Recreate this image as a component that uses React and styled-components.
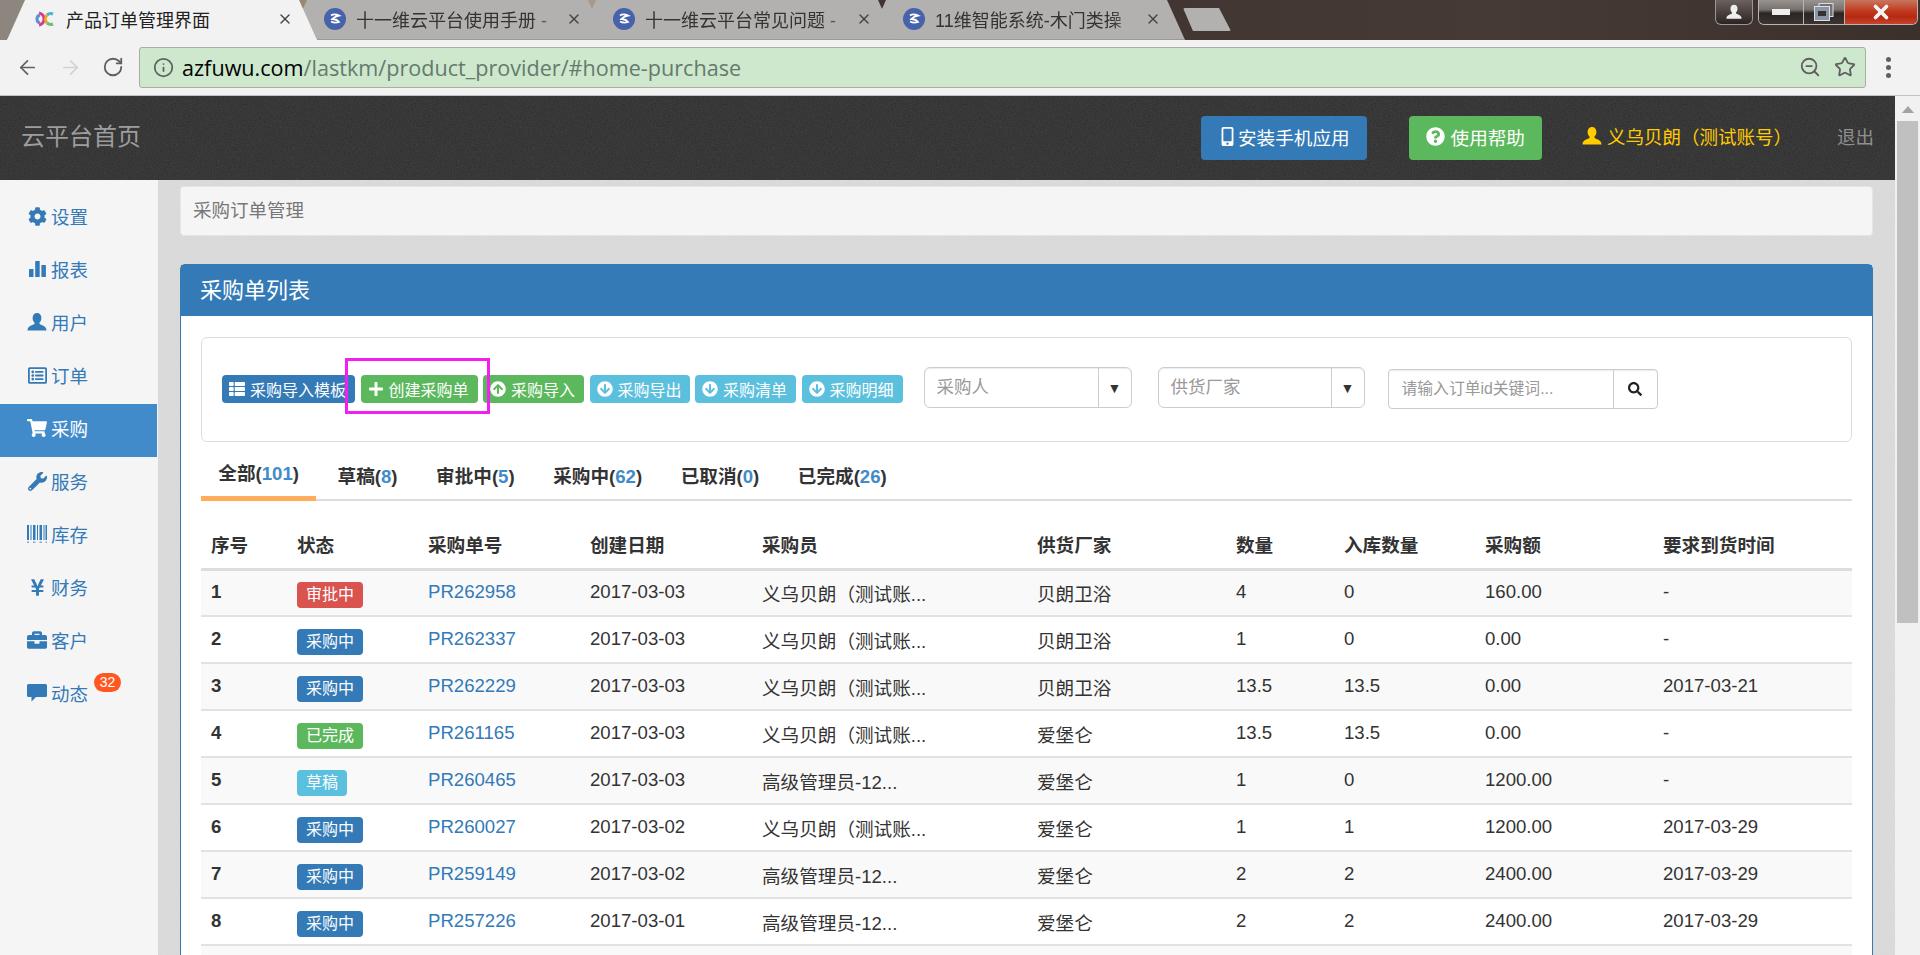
import React from "react";
import styled, { createGlobalStyle } from "styled-components";
import { ArrowLeft, ArrowRight, RotateCw, Info, ZoomOut, Star, X } from "lucide-react";
import {
  FaCog, FaRegListAlt, FaShoppingCart, FaWrench, FaYenSign, FaBriefcase,
  FaThList, FaPlus, FaArrowCircleUp, FaArrowCircleDown, FaSearch, FaMobileAlt, FaQuestionCircle,
} from "react-icons/fa";

const FONT = `"Liberation Sans", "Noto Sans CJK SC", sans-serif`;

const noise = (alpha) =>
  `url("data:image/svg+xml,%3Csvg xmlns='http://www.w3.org/2000/svg' width='240' height='240'%3E%3Cfilter id='n'%3E%3CfeTurbulence type='fractalNoise' baseFrequency='0.7' numOctaves='2' stitchTiles='stitch'/%3E%3CfeColorMatrix values='0 0 0 0 0.5 0 0 0 0 0.5 0 0 0 0 0.5 0 0 0 ${alpha} 0'/%3E%3C/filter%3E%3Crect width='240' height='240' filter='url(%23n)'/%3E%3C/svg%3E")`;

const GlobalStyle = createGlobalStyle`
  html, body {
    margin: 0;
    padding: 0;
    overflow: hidden;
    background: #f5f5f5;
  }
  * { box-sizing: border-box; }
`;

const Shell = styled.div`
  width: 1920px;
  height: 955px;
  overflow: hidden;
  display: flex;
  flex-direction: column;
  font-family: ${FONT};
  color: #333;
`;

/* browser chrome */
const TabStrip = styled.div`
  height: 40px;
  flex: none;
  display: flex;
  padding-left: 7px;
  background: linear-gradient(to right, #8d867f 0, #8d867f 30px, #9a8870 310px, #a89a8a 600px, #a89a8a 620px, #3f3330 885px, #453a36 1500px, #3c302d 1920px);
`;

const Tab = styled.div`
  position: relative;
  z-index: ${(p) => p.$z};
  width: ${(p) => p.$width}px;
  margin-left: ${(p) => (p.$first ? 0 : -28)}px;
  height: 40px;
  flex: none;
  display: flex;
  align-items: center;
  padding: 0 24px 2px ${(p) => (p.$active ? 28 : 35)}px;
  gap: ${(p) => (p.$active ? 11 : 10)}px;
  background: ${(p) => (p.$active ? "#f2f2f2" : "#b3b1b0")};
  border-bottom: 1px solid ${(p) => (p.$active ? "#f2f2f2" : "#9b9a99")};
  clip-path: polygon(18px 0, calc(100% - 18px) 0, 100% 100%, 0 100%);
  font-size: 18px;
  color: ${(p) => (p.$active ? "#222" : "#333")};
`;

const TabTitle = styled.span`
  flex: 1;
  min-width: 0;
  white-space: nowrap;
  mask-image: ${(p) => (p.$fade ? "linear-gradient(to right, #000 88%, rgba(0, 0, 0, 0.35) 100%)" : "none")};
`;

const TabClose = styled(X)`
  flex: none;
  width: 16px;
  height: 16px;
  color: #444;
`;

const NewTab = styled.div`
  width: 48px;
  height: 23px;
  margin: 8px 0 0 -2px;
  flex: none;
  background: #b3b1b0;
  border-radius: 2px;
  clip-path: polygon(0 0, 36px 0, 100% 100%, 10px 100%);
`;

const WindowControls = styled.div`
  margin-left: auto;
  height: 25px;
  display: flex;
  gap: 5px;
  padding-right: 2px;
`;

const ProfileButton = styled.div`
  width: 38px;
  height: 25px;
  display: flex;
  align-items: center;
  justify-content: center;
  border: 1px solid #9b9794;
  border-top: none;
  border-radius: 0 0 6px 6px;
  color: #eee;
  background: linear-gradient(#6b615e, #2b2422);
`;

const CaptionGroup = styled.div`
  display: flex;
  height: 25px;
  border: 1px solid #b9b5b2;
  border-top: none;
  border-radius: 0 0 6px 6px;
  overflow: hidden;
`;

const CaptionButton = styled.div`
  width: ${(p) => p.$width}px;
  display: flex;
  align-items: center;
  justify-content: center;
  border-left: ${(p) => (p.$divider ? "1px solid #b9b5b2" : "none")};
  background: ${(p) =>
    p.$close
      ? "linear-gradient(#c8765f 0, #c23a1f 45%, #b52a12 70%, #c9432a 100%)"
      : "linear-gradient(#9a9491 0, #77716e 40%, #2b2523 55%, #3b3432 100%)"};
`;

const Toolbar = styled.div`
  height: 56px;
  flex: none;
  display: flex;
  align-items: center;
  background: #f2f2f2;
  border-bottom: 1px solid #c4c4c4;
  padding: 0 16px 1px 16px;
`;

const NavIcon = styled.span`
  display: flex;
  color: ${(p) => (p.$disabled ? "#d2d2d2" : "#5f5f5f")};
  margin-right: ${(p) => p.$gap}px;
`;

const Omnibox = styled.div`
  width: 1727px;
  height: 41px;
  display: flex;
  align-items: center;
  padding: 0 9px 0 13px;
  background: #cde8cd;
  border: 1px solid #a9aca9;
  border-radius: 3px;
  font-family: "Open Sans", sans-serif;
  font-size: 21.6px;
  color: #667a6c;
`;

const UrlText = styled.span`
  flex: 1;
  margin-left: 8px;
  white-space: nowrap;
`;

const UrlHost = styled.span`
  color: #000;
`;

const MenuDots = styled.div`
  margin-left: 20px;
  display: flex;
  flex-direction: column;
  gap: 3px;
`;

const MenuDot = styled.i`
  width: 5px;
  height: 5px;
  border-radius: 50%;
  background: #606060;
`;

/* page */
const Viewport = styled.div`
  flex: 1;
  min-height: 0;
  display: flex;
`;

const Page = styled.div`
  flex: 1;
  min-width: 0;
  display: flex;
  flex-direction: column;
`;

const Scrollbar = styled.div`
  width: 25px;
  flex: none;
  background: #f1f1f1;
  display: flex;
  flex-direction: column;
  align-items: center;
`;

const ScrollArrow = styled.div`
  width: 0;
  height: 0;
  margin: 10px 0 8px;
  border-left: 6px solid transparent;
  border-right: 6px solid transparent;
  border-bottom: 7px solid #a3a3a3;
`;

const ScrollThumb = styled.div`
  width: 21px;
  height: 502px;
  background: #c0c0c0;
`;

const TopBar = styled.header`
  height: 84px;
  flex: none;
  display: flex;
  align-items: center;
  padding: 0 21px;
  background: #2c2c2c ${noise(0.16)};
`;

const Brand = styled.div`
  font-size: 24px;
  padding-bottom: 8px;
  color: #9d9d9d;
  margin-right: auto;
`;

const TopButton = styled.div`
  height: 44px;
  display: flex;
  align-items: center;
  gap: ${(p) => p.$gap}px;
  padding: 0 ${(p) => p.$pad}px 4px;
  margin-right: ${(p) => p.$after}px;
  border-radius: 4px;
  font-size: 18.6px;
  color: #fff;
  background: ${(p) => p.$bg};
`;

const UserName = styled.div`
  display: flex;
  align-items: center;
  gap: 5px;
  padding-bottom: 4px;
  font-size: 18.5px;
  color: #ffcc00;
  margin-right: 45px;
`;

const Logout = styled.div`
  font-size: 18.5px;
  padding-bottom: 4px;
  color: #8f8f8f;
`;

const Body = styled.div`
  flex: 1;
  min-height: 0;
  display: flex;
`;

const Sidebar = styled.nav`
  width: 158px;
  flex: none;
  padding-top: 12px;
  background: #f5f5f5;
`;

const NavItem = styled.div`
  position: relative;
  width: 157px;
  height: 53px;
  display: flex;
  align-items: center;
  gap: 4px;
  padding: 0 0 5px 27px;
  font-size: 18.5px;
  color: ${(p) => (p.$active ? "#fff" : "#337ab7")};
  background: ${(p) => (p.$active ? "#428bca" : "transparent")};
`;

const NavGlyph = styled.span`
  width: 20px;
  display: flex;
  justify-content: center;
`;

const CountBubble = styled.span`
  position: absolute;
  left: 94px;
  top: 4px;
  width: 27px;
  height: 19px;
  border-radius: 10px;
  background: #ff5722;
  color: #fff;
  font-size: 14px;
  line-height: 19px;
  text-align: center;
`;

const Content = styled.main`
  flex: 1;
  min-width: 0;
  padding: 6px 22px 0;
  background: #dcdcdc ${noise(0.14)};
`;

const Breadcrumb = styled.div`
  height: 50px;
  display: flex;
  align-items: center;
  padding: 0 0 4px 12px;
  border: 1px solid #e6e6e6;
  border-radius: 4px;
  background: #f5f5f5;
  font-size: 18.5px;
  color: #777;
`;

const Panel = styled.section`
  margin-top: 28px;
  border: 1px solid #337ab7;
  border-radius: 5px 5px 0 0;
  background: #fff;
`;

const PanelHead = styled.div`
  height: 51px;
  display: flex;
  align-items: center;
  padding: 0 0 5px 19px;
  background: #337ab7;
  font-size: 22px;
  color: #fff;
`;

const PanelBody = styled.div`
  padding: 21px 20px 0;
`;

const Well = styled.div`
  position: relative;
  height: 105px;
  display: flex;
  align-items: flex-start;
  padding: 37px 0 0 20px;
  border: 1px solid #ddd;
  border-radius: 6px;
`;

const Actions = styled.div`
  display: flex;
  gap: 5.5px;
`;

const ActionButton = styled.div`
  width: ${(p) => p.$width}px;
  height: 28px;
  display: flex;
  align-items: center;
  gap: ${(p) => p.$gap}px;
  padding-left: 7px;
  border-radius: 4px;
  white-space: nowrap;
  font-size: 16px;
  color: #fff;
  background: ${(p) => p.$bg};
`;

const Highlight = styled.div`
  position: absolute;
  left: 143px;
  top: 20px;
  width: 145px;
  height: 56px;
  border: 3px solid #f31ff0;
`;

const Picker = styled.div`
  width: ${(p) => p.$width}px;
  height: 41px;
  margin: -8px 0 0 ${(p) => p.$left}px;
  display: flex;
  border: 1px solid #ccc;
  border-radius: 6px;
  box-shadow: inset 0 1px 1px rgba(0, 0, 0, 0.075);
  font-size: 17.5px;
  color: #999;
`;

const PickerLabel = styled.div`
  flex: 1;
  padding: 5px 0 0 12px;
`;

const PickerCaret = styled.div`
  width: 33px;
  display: flex;
  align-items: center;
  justify-content: center;
  border-left: 1px solid #ccc;
  color: #333;
  font-size: 14px;
`;

const SearchBox = styled.div`
  width: 270px;
  height: 40px;
  margin: -6px 0 0 23px;
  display: flex;
  border: 1px solid #ccc;
  border-radius: 4px;
  box-shadow: inset 0 1px 1px rgba(0, 0, 0, 0.075);
`;

const SearchInput = styled.input`
  width: 224px;
  border: none;
  outline: none;
  background: transparent;
  padding: 0 0 0 13px;
  font-family: ${FONT};
  font-size: 15.8px;
  &::placeholder { color: #999; opacity: 1; }
`;

const SearchButton = styled.div`
  flex: 1;
  display: flex;
  align-items: center;
  justify-content: center;
  border-left: 1px solid #ccc;
  color: #222;
`;

const Tabs = styled.div`
  height: 59px;
  display: flex;
  align-items: flex-end;
  gap: 4px;
  border-bottom: 2px solid #ddd;
`;

const FilterTab = styled.div`
  height: 46px;
  padding: ${(p) => (p.$active ? "6px" : "9px")} 17.3px 0;
  margin-bottom: -2px;
  border-bottom: 5px solid ${(p) => (p.$active ? "#ffad5c" : "transparent")};
  font-size: 18.6px;
  line-height: 26px;
  font-weight: 700;
`;

const Count = styled.span`
  color: #428bca;
`;

const OrderTable = styled.table`
  width: 1651px;
  margin-top: 20px;
  table-layout: fixed;
  border-collapse: collapse;
  font-size: 18.6px;
`;

const HeadCell = styled.th`
  height: 48px;
  padding: 0 0 2px 10px;
  text-align: left;
  font-weight: 700;
  border-bottom: 3px solid #ddd;
`;

const Row = styled.tr`
  height: 47px;
  background: ${(p) => (p.$striped ? "#f9f9f9" : "#fff")};
`;

const Cell = styled.td`
  padding: 0 0 1px 10px;
  border-bottom: 2px solid #e2e2e2;
  font-weight: ${(p) => (p.$bold ? 700 : 400)};
  white-space: nowrap;
`;

const StatusLabel = styled.span`
  display: inline-block;
  height: 26px;
  margin-top: 5px;
  padding: 0 9px;
  border-radius: 4px;
  font-size: 16px;
  line-height: 26px;
  color: #fff;
  background: ${(p) => p.$bg};
`;

const OrderLink = styled.a`
  color: #337ab7;
`;

const BLUE = "#337ab7";
const GREEN = "#5cb85c";
const CYAN = "#5bc0de";
const RED = "#d9534f";

const statusColors = { 审批中: RED, 采购中: BLUE, 已完成: GREEN, 草稿: CYAN };

const BUYER = "义乌贝朗（测试账...";
const ADMIN = "高级管理员-12...";

const rows = [
  [1, "审批中", "PR262958", "2017-03-03", BUYER, "贝朗卫浴", "4", "0", "160.00", "-"],
  [2, "采购中", "PR262337", "2017-03-03", BUYER, "贝朗卫浴", "1", "0", "0.00", "-"],
  [3, "采购中", "PR262229", "2017-03-03", BUYER, "贝朗卫浴", "13.5", "13.5", "0.00", "2017-03-21"],
  [4, "已完成", "PR261165", "2017-03-03", BUYER, "爱堡仑", "13.5", "13.5", "0.00", "-"],
  [5, "草稿", "PR260465", "2017-03-03", ADMIN, "爱堡仑", "1", "0", "1200.00", "-"],
  [6, "采购中", "PR260027", "2017-03-02", BUYER, "爱堡仑", "1", "1", "1200.00", "2017-03-29"],
  [7, "采购中", "PR259149", "2017-03-02", ADMIN, "爱堡仑", "2", "2", "2400.00", "2017-03-29"],
  [8, "采购中", "PR257226", "2017-03-01", ADMIN, "爱堡仑", "2", "2", "2400.00", "2017-03-29"],
];

const columns = [
  ["序号", 86], ["状态", 131], ["采购单号", 162], ["创建日期", 172], ["采购员", 275],
  ["供货厂家", 199], ["数量", 108], ["入库数量", 141], ["采购额", 178], ["要求到货时间", 199],
];

const filters = [
  ["全部", 101, true], ["草稿", 8], ["审批中", 5], ["采购中", 62], ["已取消", 0], ["已完成", 26],
];

const BarsIcon = () => (
  <svg width="19" height="18" viewBox="0 0 19 18" fill="currentColor">
    <rect x="1" y="9" width="4.5" height="8" rx="0.6" />
    <rect x="7.2" y="1" width="4.5" height="16" rx="0.6" />
    <rect x="13.4" y="5" width="4.5" height="12" rx="0.6" />
  </svg>
);

const UserIcon = ({ size = 20 }) => (
  <svg width={size} height={size} viewBox="0 0 20 20" fill="currentColor">
    <path d="M10 1C7.2 1 5.6 3 5.6 6c0 2 .8 3.6 1.9 4.6V12C6.5 13 .5 13.5.5 18.5h19c0-5-6-5.5-7-6.5v-1.4c1.1-1 1.9-2.6 1.9-4.6 0-3-1.6-5-4.4-5z" />
  </svg>
);

const BarcodeIcon = () => (
  <svg width="20" height="18" viewBox="0 0 20 18" fill="currentColor">
    <path d="M0 0h2v15H0zM3.5 0h1v15h-1zM6 0h2.5v15H6zM10 0h1v15h-1zM12.5 0h2.500v15h-2.500zM16.500 0h1v15h-1zM18.500 0h1.500v15h-1.500z" />
    <path d="M0 16.500h2V18H0zM6 16.500h2.500V18H6zM12.500 16.500h2.500V18h-2.500zM18.500 16.500H20V18h-1.500z" opacity="0.6" />
  </svg>
);

const CommentIcon = () => (
  <svg width="20" height="18" viewBox="0 0 20 18" fill="currentColor">
    <path d="M1.500 0h17A1.500 1.500 0 0 1 20 1.500v10a1.500 1.500 0 0 1-1.500 1.500H9l-4.500 4.500V13h-3A1.500 1.500 0 0 1 0 11.500v-10A1.500 1.500 0 0 1 1.500 0z" />
  </svg>
);

const navItems = [
  ["设置", <FaCog size={19} />],
  ["报表", <BarsIcon />],
  ["用户", <UserIcon />],
  ["订单", <FaRegListAlt size={19} />],
  ["采购", <FaShoppingCart size={20} />, true],
  ["服务", <FaWrench size={19} />],
  ["库存", <BarcodeIcon />],
  ["财务", <FaYenSign size={19} />],
  ["客户", <FaBriefcase size={20} />],
  ["动态", <CommentIcon />],
];

const actionButtons = [
  ["采购导入模板", BLUE, <FaThList size={16} />, 133, 5],
  ["创建采购单", GREEN, <FaPlus size={16} />, 117, 5],
  ["采购导入", GREEN, <FaArrowCircleUp size={16} />, 101, 5],
  ["采购导出", CYAN, <FaArrowCircleDown size={16} />, 100, 5],
  ["采购清单", CYAN, <FaArrowCircleDown size={16} />, 101, 5],
  ["采购明细", CYAN, <FaArrowCircleDown size={16} />, 101, 5],
];

const JcLogo = () => (
  <svg width="20" height="20" viewBox="0 0 20 20" fill="none" strokeWidth="3" style={{ flex: "none" }}>
    <path d="M4 4a6 6 0 0 1 5 6 6 6 0 0 1-5 6" stroke="#d93a8c" />
    <path d="M5 6a4 4 0 0 0-3 4 4 4 0 0 0 3 4" stroke="#5f8fd8" />
    <path d="M18 5a6 6 0 0 0-6 1" stroke="#49b6c9" />
    <path d="M12 6a6 6 0 0 0 0 8" stroke="#e9a62c" />
    <path d="M12 14a6 6 0 0 0 6 1" stroke="#6cc070" />
  </svg>
);

const ZLogo = () => (
  <svg width="22" height="22" viewBox="0 0 22 22" style={{ flex: "none" }}>
    <circle cx="11" cy="11" r="11" fill="#4662ab" />
    <path d="M7 7.500c2-1.500 5-1.500 8 0-3 .5-5 2-6.500 3.500 2.500 0 4.500.5 6.500 3-3 1-6 .5-8-.5" fill="none" stroke="#fff" strokeWidth="1.800" />
  </svg>
);

const browserTabs = [
  { title: "产品订单管理界面", width: 310, active: true },
  { title: "十一维云平台使用手册 -", width: 317, z: 3 },
  { title: "十一维云平台常见问题 -", width: 318, z: 2 },
  { title: "11维智能系统-木门类操", width: 317, z: 1 },
];

function App() {
  return (
    <Shell>
      <GlobalStyle />
      <TabStrip>
        {browserTabs.map((tab, i) => (
          <Tab key={tab.title} $active={tab.active} $first={i === 0} $width={tab.width} $z={tab.active ? 4 : tab.z}>
            {tab.active ? <JcLogo /> : <ZLogo />}
            <TabTitle $fade={!tab.active}>{tab.title}</TabTitle>
            <TabClose strokeWidth={2} />
          </Tab>
        ))}
        <NewTab />
        <WindowControls>
          <ProfileButton>
            <UserIcon size={16} />
          </ProfileButton>
          <CaptionGroup>
            <CaptionButton $width={44}>
              <svg width="18" height="6"><rect width="18" height="6" fill="#eee" /></svg>
            </CaptionButton>
            <CaptionButton $width={41} $divider>
              <svg width="20" height="18" viewBox="0 0 20 18">
                <rect x="5" y="0.5" width="14" height="13" fill="#77716e" stroke="#dde" />
                <rect x="0.5" y="3.5" width="15" height="14" fill="#8c95a2" stroke="#dde" />
                <rect x="4" y="8" width="8" height="5" fill="#333" />
              </svg>
            </CaptionButton>
            <CaptionButton $width={73} $close $divider>
              <X size={22} color="#f4f4f4" strokeWidth={4} />
            </CaptionButton>
          </CaptionGroup>
        </WindowControls>
      </TabStrip>

      <Toolbar>
        <NavIcon $gap={20}><ArrowLeft size={23} strokeWidth={1.8} /></NavIcon>
        <NavIcon $gap={20} $disabled><ArrowRight size={23} strokeWidth={1.8} /></NavIcon>
        <NavIcon $gap={15}><RotateCw size={22} strokeWidth={2} /></NavIcon>
        <Omnibox>
          <NavIcon $gap={0}><Info size={21} strokeWidth={2} /></NavIcon>
          <UrlText>
            <UrlHost>azfuwu.com</UrlHost>/lastkm/product_provider/#home-purchase
          </UrlText>
          <NavIcon $gap={13}><ZoomOut size={22} strokeWidth={2} /></NavIcon>
          <NavIcon $gap={0}><Star size={22} strokeWidth={2} /></NavIcon>
        </Omnibox>
        <MenuDots>
          <MenuDot />
          <MenuDot />
          <MenuDot />
        </MenuDots>
      </Toolbar>

      <Viewport>
        <Page>
          <TopBar>
            <Brand>云平台首页</Brand>
            <TopButton $bg={BLUE} $pad={17} $gap={1} $after={42}>
              <FaMobileAlt size={19} />
              安装手机应用
            </TopButton>
            <TopButton $bg={GREEN} $pad={17} $gap={6} $after={40}>
              <FaQuestionCircle size={19} />
              使用帮助
            </TopButton>
            <UserName>
              <UserIcon size={20} />
              义乌贝朗（测试账号）
            </UserName>
            <Logout>退出</Logout>
          </TopBar>

          <Body>
            <Sidebar>
              {navItems.map(([label, icon, active]) => (
                <NavItem key={label} $active={active}>
                  <NavGlyph>{icon}</NavGlyph>
                  {label}
                  {label === "动态" && <CountBubble>32</CountBubble>}
                </NavItem>
              ))}
            </Sidebar>

            <Content>
              <Breadcrumb>采购订单管理</Breadcrumb>
              <Panel>
                <PanelHead>采购单列表</PanelHead>
                <PanelBody>
                  <Well>
                    <Actions>
                      {actionButtons.map(([label, bg, icon, width, gap]) => (
                        <ActionButton key={label} $bg={bg} $width={width} $gap={gap}>
                          {icon}
                          {label}
                        </ActionButton>
                      ))}
                    </Actions>
                    <Picker $width={208} $left={21}>
                      <PickerLabel>采购人</PickerLabel>
                      <PickerCaret>▼</PickerCaret>
                    </Picker>
                    <Picker $width={207} $left={26}>
                      <PickerLabel>供货厂家</PickerLabel>
                      <PickerCaret>▼</PickerCaret>
                    </Picker>
                    <SearchBox>
                      <SearchInput placeholder="请输入订单id关键词..." />
                      <SearchButton><FaSearch size={14} /></SearchButton>
                    </SearchBox>
                    <Highlight />
                  </Well>

                  <Tabs>
                    {filters.map(([label, count, active]) => (
                      <FilterTab key={label} $active={active}>
                        {label}(<Count>{count}</Count>)
                      </FilterTab>
                    ))}
                  </Tabs>

                  <OrderTable>
                    <colgroup>
                      {columns.map(([name, width]) => <col key={name} style={{ width }} />)}
                    </colgroup>
                    <thead>
                      <tr>
                        {columns.map(([name]) => <HeadCell key={name}>{name}</HeadCell>)}
                      </tr>
                    </thead>
                    <tbody>
                      {rows.map(([no, status, code, date, buyer, vendor, qty, stocked, amount, due]) => (
                        <Row key={code} $striped={no % 2 === 1}>
                          <Cell $bold>{no}</Cell>
                          <Cell><StatusLabel $bg={statusColors[status]}>{status}</StatusLabel></Cell>
                          <Cell><OrderLink>{code}</OrderLink></Cell>
                          <Cell>{date}</Cell>
                          <Cell>{buyer}</Cell>
                          <Cell>{vendor}</Cell>
                          <Cell>{qty}</Cell>
                          <Cell>{stocked}</Cell>
                          <Cell>{amount}</Cell>
                          <Cell>{due}</Cell>
                        </Row>
                      ))}
                      <Row $striped>
                        <Cell colSpan={10} />
                      </Row>
                    </tbody>
                  </OrderTable>
                </PanelBody>
              </Panel>
            </Content>
          </Body>
        </Page>
        <Scrollbar>
          <ScrollArrow />
          <ScrollThumb />
        </Scrollbar>
      </Viewport>
    </Shell>
  );
}

export default App;
